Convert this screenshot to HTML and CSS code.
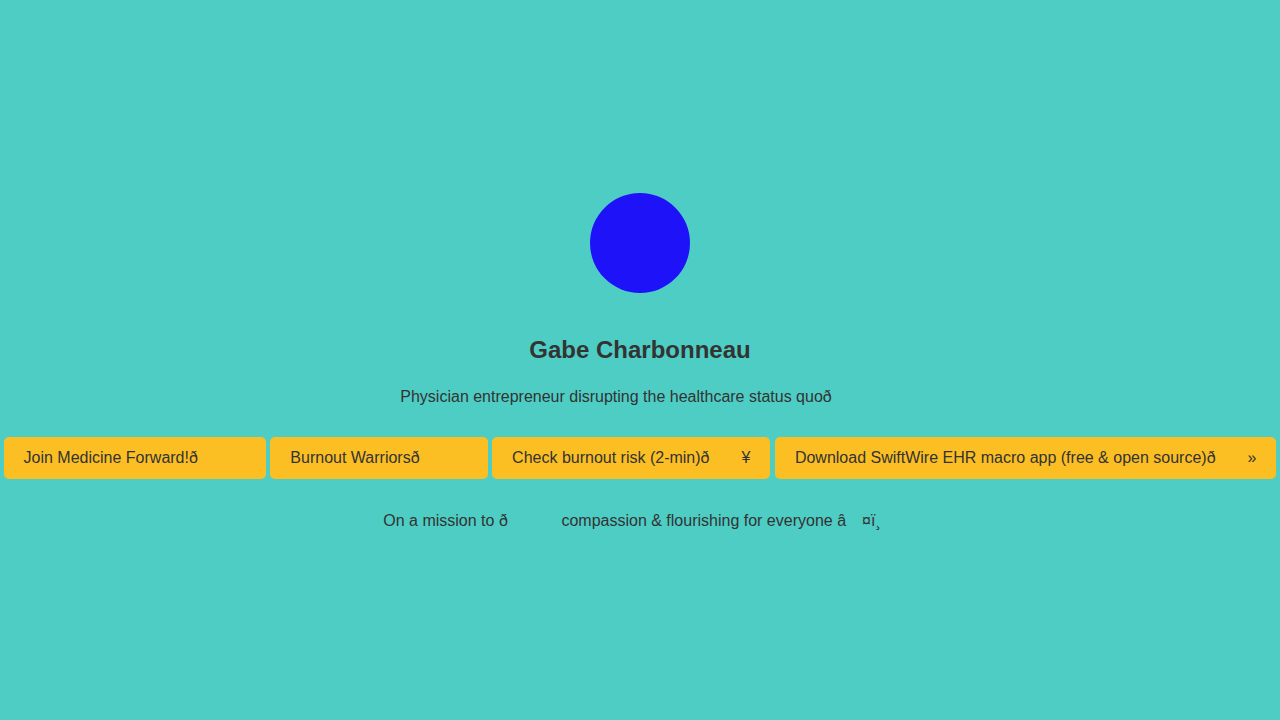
FILE: index.html
```html
<!DOCTYPE html>
<html lang="en">
<head>
<meta charset="utf-8">
<title>Gabe Charbonneau</title>
<link rel="stylesheet" href="styles.css">
</head>
<body>
<main class="profile">
  <div class="avatar"></div>
  <h1 class="name">Gabe Charbonneau</h1>
  <p class="bio">Physician entrepreneur disrupting the healthcare status quoð<span class="ctl c3"></span></p>
  <nav class="links">
    <a class="link" href="#">Join Medicine Forward!ð<span class="ctl c3"></span></a>
    <a class="link" href="#">Burnout Warriorsð<span class="ctl c3"></span></a>
    <a class="link" href="#">Check burnout risk (2-min)ð<span class="ctl c2"></span>¥</a>
    <a class="link" href="#">Download SwiftWire EHR macro app (free &amp; open source)ð<span class="ctl c2"></span>»</a>
  </nav>
  <p class="mission">On a mission to ð<span class="ctl c3"></span> compassion &amp; flourishing for everyone â<span class="ctl c1"></span>¤ï¸<span class="ctl c1"></span></p>
</main>
</body>
</html>
```
FILE: styles.css
```css
* { box-sizing: border-box; }
html, body { margin: 0; padding: 0; }
body {
  background: #4ecdc4;
  color: #333333;
  font-family: "Liberation Sans", Arial, sans-serif;
  font-size: 16px;
}
.profile {
  min-height: 100vh;
  display: flex;
  flex-direction: column;
  align-items: center;
  justify-content: center;
  text-align: center;
  padding-top: 2px;
}
.avatar {
  width: 100px;
  height: 100px;
  border-radius: 50%;
  background: #1e12f8;
}
.name {
  margin: 43px 0 0;
  font-size: 24px;
  font-weight: bold;
  line-height: 28px;
}
.bio {
  margin: 24px 0 0;
  line-height: 18px;
}
.links {
  margin-top: 31px;
  display: flex;
  justify-content: center;
  gap: 4.5px;
  width: 100%;
}
.link {
  display: block;
  background: #fbbf24;
  color: #333333;
  text-decoration: none;
  padding: 12px 20px;
  line-height: 18px;
  border-radius: 5px;
  white-space: nowrap;
}
.mission {
  margin: 33px 0 0;
  line-height: 18px;
}
.ctl { letter-spacing: 3px; }
.mission .ctl.c1 { letter-spacing: 6px; }
.mission .ctl.c3 { letter-spacing: 3.4px; }
.ctl.c1::before { content: "\9d"; }
.ctl.c2::before { content: "\9f\94"; }
.ctl.c3::before { content: "\9f\9a\80"; }
```
